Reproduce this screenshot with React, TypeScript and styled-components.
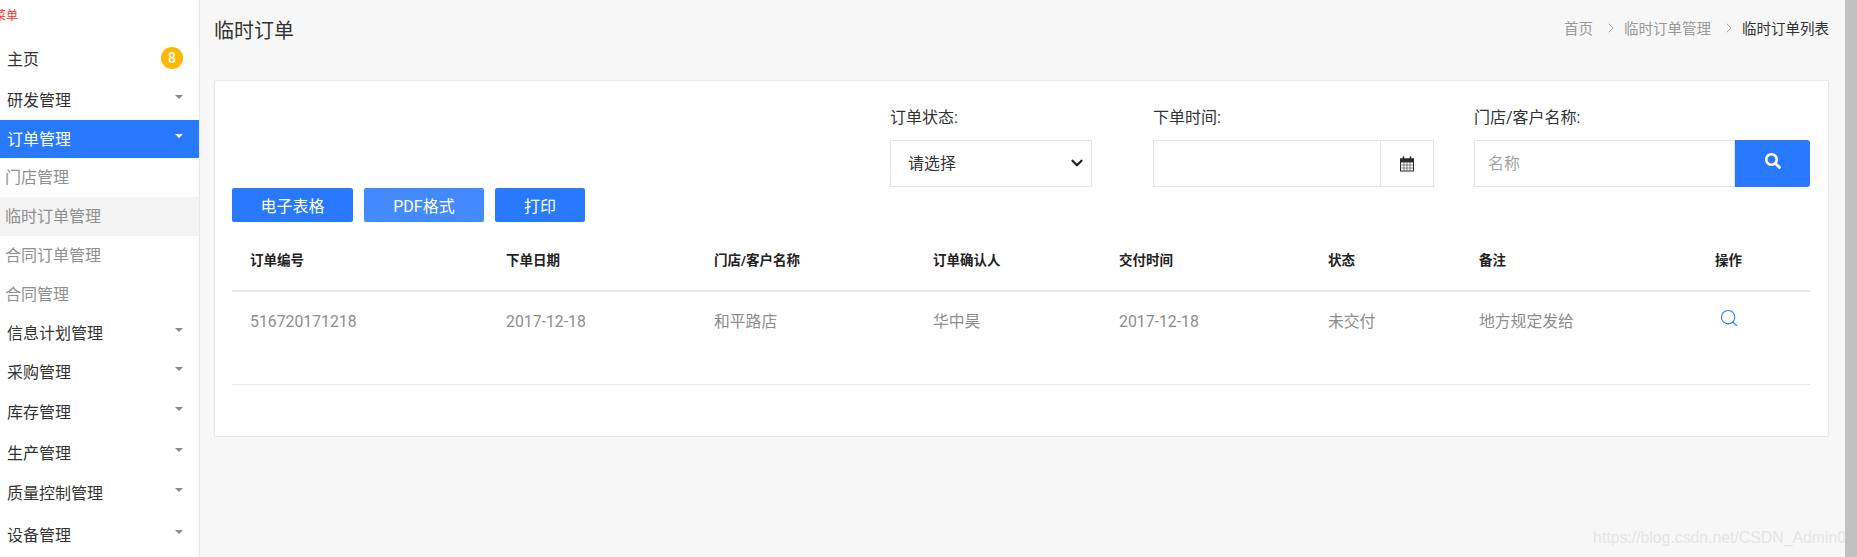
import React from "react";
import styled, { createGlobalStyle } from "styled-components";
import { FaSearch } from "react-icons/fa";
import { Search, ChevronRight, ChevronDown } from "lucide-react";

const Global = createGlobalStyle`
  html, body { margin: 0; padding: 0; height: 100%; overflow: hidden; background: #f7f7f7; }
  body { font-family: Roboto, "Noto Sans CJK SC", sans-serif; color: #333; }
  * { box-sizing: border-box; }
`;

const Page = styled.div`
  position: relative;
  display: flex;
  width: 1857px;
  height: 557px;
  overflow: hidden;
  background: #f7f7f7;
`;

const Sidebar = styled.aside`
  flex: 0 0 200px;
  height: 557px;
  background: #fff;
  border-right: 1px solid #e7e7e7;
  overflow: hidden;
`;

const Logo = styled.div`
  height: 39px;
  padding-top: 9px;
  margin-left: -6px;
  font-size: 12px;
  line-height: 14px;
  color: #f4361c;
`;

const NavItem = styled.div<{ $h: number; $active?: boolean }>`
  display: flex;
  align-items: center;
  justify-content: space-between;
  height: ${(p) => p.$h}px;
  padding: 0 16px 3px 7px;
  font-size: 16px;
  color: ${(p) => (p.$active ? "#fff" : "#333")};
  background: ${(p) => (p.$active ? "#2979ff" : "transparent")};
`;

const SubItem = styled.div<{ $current?: boolean }>`
  display: flex;
  align-items: center;
  height: 39px;
  padding: 0 0 3px 5px;
  font-size: 16px;
  color: #8f8f8f;
  background: ${(p) => (p.$current ? "#f4f4f4" : "transparent")};
`;

const Caret = styled.span<{ $light?: boolean }>`
  width: 0;
  height: 0;
  margin-top: -4px;
  border-left: 4px solid transparent;
  border-right: 4px solid transparent;
  border-top: 4px solid ${(p) => (p.$light ? "#fff" : "#8a8a8a")};
`;

const Badge = styled.span`
  display: flex;
  align-items: center;
  justify-content: center;
  width: 22px;
  height: 22px;
  margin: -1px 0 0;
  border-radius: 50%;
  background: #ffb800;
  color: #fff;
  font-size: 14px;
  font-weight: 500;
`;

const Main = styled.main`
  flex: 0 0 1644px;
  padding: 0 16px 0 14px;
`;

const PageHead = styled.header`
  display: flex;
  align-items: center;
  justify-content: space-between;
  height: 80px;
  padding-bottom: 22px;
`;

const Title = styled.h1`
  margin: 0;
  font-size: 20px;
  font-weight: 400;
  color: #333;
`;

const Crumbs = styled.nav`
  display: flex;
  align-items: center;
  margin: -3px 0 0 0;
  font-size: 14.5px;
  color: #999;
`;

const CrumbSep = styled.span`
  display: flex;
  margin: 0 5px 0 10px;
  color: #a0a0a0;
`;

const CrumbNow = styled.span`
  color: #333;
`;

const Card = styled.section`
  height: 357px;
  padding: 0 18px 0 17px;
  background: #fff;
  border: 1px solid #e8e8e8;
  border-radius: 2px;
`;

const Filters = styled.div`
  display: flex;
  justify-content: flex-end;
  padding-top: 25px;
`;

const Field = styled.div<{ $w: number; $ml: number }>`
  width: ${(p) => p.$w}px;
  margin-left: ${(p) => p.$ml}px;
`;

const Label = styled.label`
  display: block;
  height: 34px;
  font-size: 16px;
  line-height: 24px;
  color: #333;
`;

const SelectWrap = styled.div`
  position: relative;
  height: 47px;
`;

const Select = styled.select`
  display: block;
  width: 100%;
  height: 47px;
  padding: 0 30px 0 17px;
  appearance: none;
  background: #fff;
  border: 1px solid #e4e4e4;
  border-radius: 0;
  font: 400 16px Roboto, "Noto Sans CJK SC", sans-serif;
  color: #333;
  outline: none;
`;

const SelectArrow = styled.span`
  position: absolute;
  top: 14px;
  right: 6px;
  display: flex;
  color: #222;
  pointer-events: none;
`;

const Joined = styled.div`
  display: flex;
  height: 47px;
`;

const TextInput = styled.input`
  flex: 1;
  min-width: 0;
  height: 100%;
  padding: 0 13px;
  background: #fff;
  border: 1px solid #e4e4e4;
  border-radius: 0;
  font: 400 16px Roboto, "Noto Sans CJK SC", sans-serif;
  color: #333;
  outline: none;
  &::placeholder { color: #a3a3a3; opacity: 1; }
`;

const AddOn = styled.span`
  display: flex;
  align-items: center;
  justify-content: center;
  flex: 0 0 53px;
  border: 1px solid #e4e4e4;
  border-left: 0;
  color: #333;
`;

const SearchButton = styled.button`
  display: flex;
  align-items: center;
  justify-content: center;
  flex: 0 0 75px;
  padding: 0 0 5px;
  border: 0;
  border-radius: 0 3px 3px 0;
  background: #2979ff;
  color: #fff;
  font-size: 16px;
`;

const Buttons = styled.div`
  display: flex;
  gap: 11px;
  margin-top: 1px;
`;

const Btn = styled.button<{ $w: number; $light?: boolean }>`
  width: ${(p) => p.$w}px;
  height: 34px;
  padding: 0;
  border: 0;
  border-radius: 2px;
  background: ${(p) => (p.$light ? "#448aff" : "#2979ff")};
  color: #fff;
  font: 400 16px Roboto, "Noto Sans CJK SC", sans-serif;
`;

const Table = styled.table`
  width: 1578px;
  table-layout: fixed;
  border-collapse: separate;
  border-spacing: 0;
`;

const Th = styled.th`
  height: 70px;
  padding: 28px 18px 20px;
  border-bottom: 2px solid #e9e9e9;
  font-size: 13.5px;
  font-weight: 700;
  line-height: 20px;
  text-align: left;
  color: #222;
`;

const Td = styled.td`
  height: 93px;
  padding: 19px 18px 0;
  border-bottom: 1px solid #e9e9e9;
  font-size: 15.8px;
  line-height: 22px;
  vertical-align: top;
  color: #8d8d8d;
`;

const ActionIcon = styled.span`
  display: block;
  margin: -3px 0 0 4px;
  color: #2979ff;
`;

const Scrollbar = styled.div`
  flex: 0 0 13px;
  height: 557px;
  background: #c1c1c1;
`;

const Watermark = styled.div`
  position: absolute;
  right: 11px;
  bottom: 9px;
  font: 400 15.8px "Liberation Sans", sans-serif;
  line-height: 20px;
  color: rgba(224, 224, 224, 0.8);
`;

const CalendarIcon = () => (
  <svg width="16" height="16" viewBox="0 0 16 16" fill="none" aria-hidden="true">
    <rect x="1" y="2.5" width="14" height="4" fill="#2b2b2b" />
    <rect x="1.5" y="3" width="13" height="12" stroke="#2b2b2b" />
    <path d="M1.5 9h13M1.5 12h13M5 6.5V15M8 6.5V15M11 6.5V15" stroke="#555" strokeWidth="0.7" />
    <path d="M4.5 1v3M11.5 1v3" stroke="#2b2b2b" strokeWidth="1.6" strokeLinecap="round" />
  </svg>
);

const columns = [256, 208, 219, 186, 209, 151, 236, 113];
const headers = ["订单编号", "下单日期", "门店/客户名称", "订单确认人", "交付时间", "状态", "备注", "操作"];
const row = ["516720171218", "2017-12-18", "和平路店", "华中昊", "2017-12-18", "未交付", "地方规定发给"];

export default function App() {
  return (
    <Page>
      <Global />
      <Sidebar>
        <Logo>菜单</Logo>
        <NavItem $h={41}>主页<Badge>8</Badge></NavItem>
        <NavItem $h={40}>研发管理<Caret /></NavItem>
        <NavItem $h={38} $active>订单管理<Caret $light /></NavItem>
        <SubItem>门店管理</SubItem>
        <SubItem $current>临时订单管理</SubItem>
        <SubItem>合同订单管理</SubItem>
        <SubItem>合同管理</SubItem>
        <NavItem $h={39}>信息计划管理<Caret /></NavItem>
        <NavItem $h={39}>采购管理<Caret /></NavItem>
        <NavItem $h={41}>库存管理<Caret /></NavItem>
        <NavItem $h={40}>生产管理<Caret /></NavItem>
        <NavItem $h={41}>质量控制管理<Caret /></NavItem>
        <NavItem $h={42}>设备管理<Caret /></NavItem>
      </Sidebar>
      <Main>
        <PageHead>
          <Title>临时订单</Title>
          <Crumbs>
            首页
            <CrumbSep><ChevronRight size={16} strokeWidth={1.4} /></CrumbSep>
            临时订单管理
            <CrumbSep><ChevronRight size={16} strokeWidth={1.4} /></CrumbSep>
            <CrumbNow>临时订单列表</CrumbNow>
          </Crumbs>
        </PageHead>
        <Card>
          <Filters>
            <Field $w={202} $ml={0}>
              <Label>订单状态:</Label>
              <SelectWrap>
                <Select defaultValue="">
                  <option value="">请选择</option>
                </Select>
                <SelectArrow><ChevronDown size={18} strokeWidth={3} /></SelectArrow>
              </SelectWrap>
            </Field>
            <Field $w={281} $ml={61}>
              <Label>下单时间:</Label>
              <Joined>
                <TextInput />
                <AddOn><CalendarIcon /></AddOn>
              </Joined>
            </Field>
            <Field $w={336} $ml={40}>
              <Label>门店/客户名称:</Label>
              <Joined>
                <TextInput placeholder="名称" />
                <SearchButton><FaSearch /></SearchButton>
              </Joined>
            </Field>
          </Filters>
          <Buttons>
            <Btn $w={121}>电子表格</Btn>
            <Btn $w={120} $light>PDF格式</Btn>
            <Btn $w={90}>打印</Btn>
          </Buttons>
          <Table>
            <colgroup>
              {columns.map((w, i) => <col key={i} width={w} />)}
            </colgroup>
            <thead>
              <tr>{headers.map((h) => <Th key={h}>{h}</Th>)}</tr>
            </thead>
            <tbody>
              <tr>
                {row.map((c, i) => <Td key={i}>{c}</Td>)}
                <Td><ActionIcon><Search size={20} strokeWidth={1.3} /></ActionIcon></Td>
              </tr>
            </tbody>
          </Table>
        </Card>
      </Main>
      <Scrollbar />
      <Watermark>https://blog.csdn.net/CSDN_Admin0</Watermark>
    </Page>
  );
}
